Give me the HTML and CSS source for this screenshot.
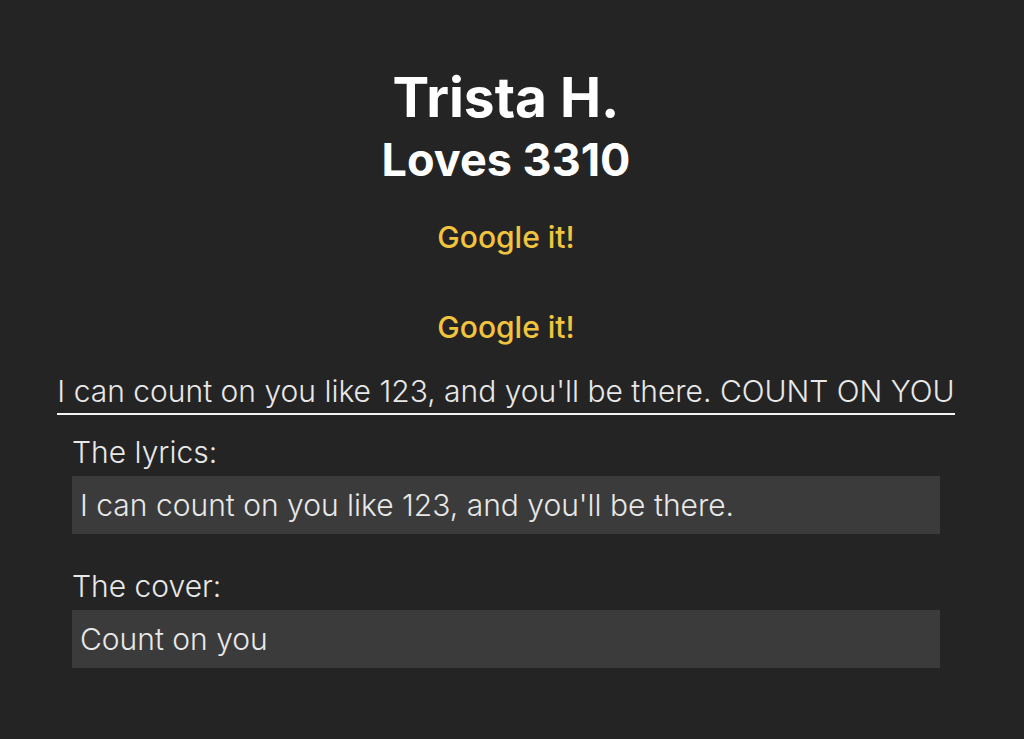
FILE: index.html
```html
<!DOCTYPE html>
<html>
<head>
<meta charset="utf-8">
<link rel="stylesheet" href="styles.css">
</head>
<body>
<main class="page">
  <h1 class="name">Trista H.</h1>
  <h2 class="loves">Loves 3310</h2>
  <a class="google" href="#">Google it!</a>
  <a class="google second" href="#">Google it!</a>
  <div class="lyric-row"><span class="lyric">I can count on you like 123, and you'll be there. COUNT ON YOU</span></div>
  <form class="form">
    <label class="label">The lyrics:</label>
    <input class="field" type="text" value="I can count on you like 123, and you'll be there.">
    <label class="label cover">The cover:</label>
    <input class="field" type="text" value="Count on you">
  </form>
</main>
</body>
</html>
```
FILE: styles.css
```css
html, body {
  margin: 0;
  padding: 0;
  background: #242424;
}
body {
  font-family: Inter, "Noto Sans", sans-serif;
  color: #e8e8e8;
}
.page {
  width: 898px;
  margin-left: 57px;
  display: flex;
  flex-direction: column;
  align-items: center;
  padding-top: 62px;
}
.name {
  margin: 0;
  font-size: 55px;
  font-weight: 700;
  line-height: 70px;
  color: #fff;
}
.loves {
  margin: 0;
  font-size: 45px;
  font-weight: 700;
  line-height: 56px;
  color: #fff;
}
.google {
  color: #f1c43f;
  text-decoration: none;
  font-size: 30px;
  font-weight: 500;
  line-height: 36px;
  margin-top: 31px;
}
.google.second {
  margin-top: 54px;
}
.lyric-row {
  margin-top: 28px;
  align-self: stretch;
  display: flex;
  justify-content: center;
}
.lyric {
  font-size: 30px;
  font-weight: 350;
  line-height: 36px;
  border-bottom: 2px solid #f4f4f4;
  color: #e8e8e8;
  padding-bottom: 4px;
  white-space: nowrap;
}
.form {
  align-self: stretch;
  padding: 0 15px;
  margin-top: 19px;
  display: flex;
  flex-direction: column;
}
.label {
  font-size: 30px;
  font-weight: 350;
  line-height: 36px;
  color: #e8e8e8;
}
.label.cover {
  margin-top: 34px;
}
.field {
  margin: 6px 0 0;
  height: 58px;
  box-sizing: border-box;
  border: none;
  outline: none;
  background: #3b3b3b;
  color: #e8e8e8;
  font-family: Inter, "Noto Sans", sans-serif;
  font-size: 30px;
  font-weight: 350;
  padding: 0 8px;
}
```
